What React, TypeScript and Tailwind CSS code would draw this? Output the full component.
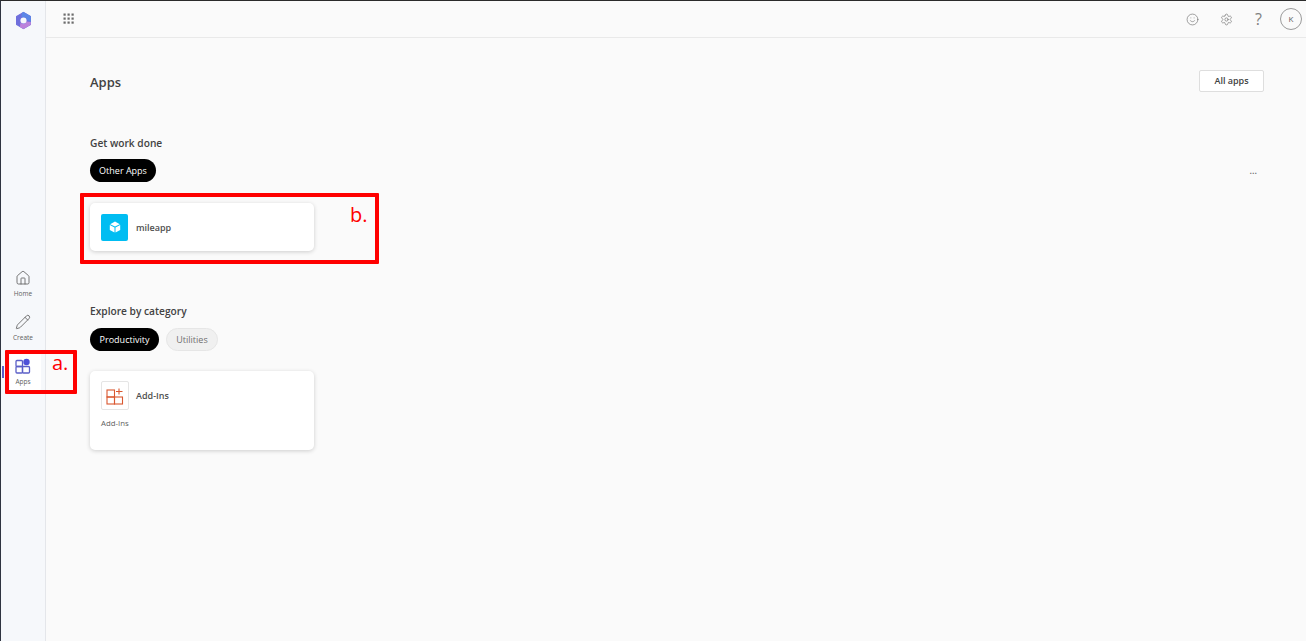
import { Home, Pencil, Smile, Settings } from 'lucide-react';

const font = { fontFamily: '"Open Sans", "Noto Sans", sans-serif' };

function CopilotLogo() {
  return (
    <svg width="19" height="19" viewBox="0 0 18 18" fill="none">
      <defs>
        <linearGradient id="logoTop" x1="6" y1="2" x2="16" y2="9">
          <stop offset="0" stopColor="#5b86e6" />
          <stop offset="1" stopColor="#4fd2f5" />
        </linearGradient>
        <linearGradient id="logoSide" x1="3" y1="4" x2="6" y2="14">
          <stop offset="0" stopColor="#6f6fdc" />
          <stop offset="1" stopColor="#b066d2" />
        </linearGradient>
        <linearGradient id="logoBottom" x1="6" y1="16" x2="16" y2="11">
          <stop offset="0" stopColor="#c67cd8" />
          <stop offset="1" stopColor="#8fa2ea" />
        </linearGradient>
      </defs>
      <path d="M9 1.4 L15.5 5.2 L15.5 12.8 L9 16.6 L2.5 12.8 L2.5 5.2 Z" fill="url(#logoSide)" stroke="url(#logoSide)" strokeWidth="1.2" strokeLinejoin="round" />
      <path d="M7.5 1.7 L9 .9 L15.3 4.6 Q16 5 16 5.8 L16 10.5 L11.8 8 A3.2 3.2 0 0 0 7 6.4 Z" fill="url(#logoTop)" />
      <path d="M6.2 11 A3.2 3.2 0 0 0 11.8 10 L16 10.5 L16 12.2 Q16 13 15.3 13.4 L9 17.1 L5.6 15.2 Z" fill="url(#logoBottom)" />
      <circle cx="9" cy="9" r="2.9" fill="#f7f8fb" />
    </svg>
  );
}

function WaffleIcon() {
  return (
    <svg width="12" height="12" viewBox="0 0 12 12" fill="#6b6b6b">
      {[1, 5, 9].flatMap((y) =>
        [1, 5, 9].map((x) => <rect key={`${x}-${y}`} x={x - 0.5} y={y - 0.5} width="2.2" height="2.2" />),
      )}
    </svg>
  );
}

function AppsIcon() {
  return (
    <svg width="16" height="16" viewBox="0 0 16 16" fill="none" stroke="#5b5fc7" strokeWidth="1.3" className="relative">
      <rect x="1" y="2.5" width="6.5" height="6" rx="1" />
      <rect x="1" y="8.5" width="6.5" height="6.5" rx="1" />
      <rect x="7.5" y="8.5" width="7" height="6.5" rx="1" />
      <circle cx="11.5" cy="4" r="3.2" fill="#4f52d8" stroke="none" />
    </svg>
  );
}

function AddInsIcon() {
  return (
    <svg width="18" height="18" viewBox="0 0 18 18" fill="none" stroke="#d9572f" strokeWidth="1.1">
      <rect x="1" y="3" width="7.5" height="7" />
      <rect x="1" y="10" width="7.5" height="7" />
      <rect x="8.5" y="10" width="8" height="7" />
      <path d="M13 1.5 V7.5 M10 4.5 H16.5" />
    </svg>
  );
}

function CubeIcon() {
  return (
    <svg width="12" height="12" viewBox="0 0 12 12" fill="#ffffff">
      <path d="M6 .6 L10.8 3.2 L6 5.6 L1.2 3.2 Z" />
      <path d="M.8 4.1 L5.5 6.5 L5.5 11.6 L.8 9 Z" />
      <path d="M11.2 4.1 L6.5 6.5 L6.5 11.6 L11.2 9 Z" />
    </svg>
  );
}

function NavItem({ icon, label, active }: { icon: React.ReactNode; label: string; active?: boolean }) {
  return (
    <div className="relative flex h-11 w-full flex-col items-center justify-center">
      {active && <div className="absolute inset-y-0 left-[9px] right-[4px] rounded-[6px] bg-white" />}
      {active && <div className="absolute left-[1px] top-[16px] h-[12px] w-[2px] bg-[#5b5fc7]" />}
      {icon}
      <span className="relative mt-[4px] text-[6.5px] leading-[8px] text-[#616161]">{label}</span>
    </div>
  );
}

function Card({ className, children }: { className: string; children: React.ReactNode }) {
  return <div className={`w-[224px] rounded-[5px] bg-white shadow-[0_1px_4px_rgba(0,0,0,0.18)] ${className}`}>{children}</div>;
}

export default function App() {
  return (
    <div className="flex h-[641px] w-[1306px] overflow-hidden border-t border-l border-t-[#2b2b2b] border-l-[#2f3440] bg-[#fafafa] text-[#424242]" style={font}>
      {/* Left rail */}
      <aside className="flex w-[45px] shrink-0 flex-col items-center border-r border-[#e4e6ea] bg-[#f6f8fb]">
        <div className="mt-[10px]">
          <CopilotLogo />
        </div>
        <div className="mt-[232px] flex w-full flex-col">
          <NavItem icon={<Home size={16} strokeWidth={1.3} color="#616161" />} label="Home" />
          <NavItem icon={<Pencil size={16} strokeWidth={1.3} color="#616161" />} label="Create" />
          <NavItem icon={<AppsIcon />} label="Apps" active />
        </div>
      </aside>

      <div className="flex min-w-0 flex-1 flex-col">
        {/* Top bar */}
        <header className="flex h-[37px] shrink-0 items-center justify-between border-b border-[#e9e9e9] pl-[17px] pr-[4px]">
          <WaffleIcon />
          <div className="flex items-center">
            <Smile size={13} strokeWidth={1.2} color="#707070" />
            <Settings size={13} strokeWidth={1.2} color="#707070" className="ml-[21px]" />
            <span className="ml-[22px] text-[16px] leading-none text-[#808080]">?</span>
            <div className="ml-[18px] flex h-[22px] w-[22px] items-center justify-center rounded-full border border-[#9a9a9a] text-[8px] text-[#616161]">
              K
            </div>
          </div>
        </header>

        {/* Main */}
        <main className="flex flex-col pl-[44px] pr-[42px]">
          <div className="mt-[32px] flex items-start justify-between">
            <h1 className="mt-[3px] text-[13px] font-semibold leading-[18px] text-[#424242]">Apps</h1>
            <button className="h-[22px] w-[65px] rounded-[2px] border border-[#dedede] bg-white text-[9px] font-semibold text-[#424242]">
              All apps
            </button>
          </div>

          <h2 className="mt-[44px] text-[10.2px] font-semibold leading-[14px]">Get work done</h2>
          <div className="mt-[9px] flex items-center justify-between">
            <span className="flex h-[23px] w-[66px] items-center justify-center rounded-full bg-black text-[9px] text-white">
              Other Apps
            </span>
            <span className="mr-[7px] text-[9px] font-semibold leading-none text-[#616161]">...</span>
          </div>

          <Card className="mt-[21px] flex h-[48px] items-center px-[11px]">
            <div className="flex h-[27px] w-[27px] items-center justify-center rounded-[2px] bg-[#00bdf2]">
              <CubeIcon />
            </div>
            <span className="ml-[8px] mt-[1px] text-[9px] font-semibold text-[#4f4f4f]">mileapp</span>
          </Card>

          <h2 className="mt-[53px] text-[10.2px] font-semibold leading-[14px]">Explore by category</h2>
          <div className="mt-[10px] flex gap-[7px]">
            <span className="flex h-[23px] w-[69px] items-center justify-center rounded-full bg-black text-[9px] font-medium text-white">
              Productivity
            </span>
            <span className="flex h-[23px] w-[52px] items-center justify-center rounded-full border border-[#e6e6e6] bg-[#f0f0f0] text-[9px] text-[#707070]">
              Utilities
            </span>
          </div>

          <Card className="mt-[20px] h-[79px] px-[11px] pt-[10px]">
            <div className="flex items-center">
              <div className="flex h-[29px] w-[28px] items-center justify-center rounded-[2px] border border-[#e5e5e5]">
                <AddInsIcon />
              </div>
              <span className="ml-[7px] text-[9px] font-semibold text-[#4f4f4f]">Add-Ins</span>
            </div>
            <p className="mt-[8px] text-[7.8px] leading-[10px] text-[#616161]">Add-Ins</p>
          </Card>
        </main>
      </div>

      {/* Red annotations drawn over the screenshot */}
      <div className="absolute left-[5px] top-[350px] h-[44px] w-[72px] rounded-[1px] border-[4px] border-[#ff0000]">
        <span className="absolute left-[43px] top-[-4px] text-[20px] leading-[26px] text-[#ff0000]">a.</span>
      </div>
      <div className="absolute left-[80px] top-[193px] h-[71px] w-[299px] rounded-[1px] border-[4px] border-[#ff0000]">
        <span className="absolute left-[266px] top-[5px] text-[20px] leading-[26px] text-[#ff0000]">b.</span>
      </div>
    </div>
  );
}
